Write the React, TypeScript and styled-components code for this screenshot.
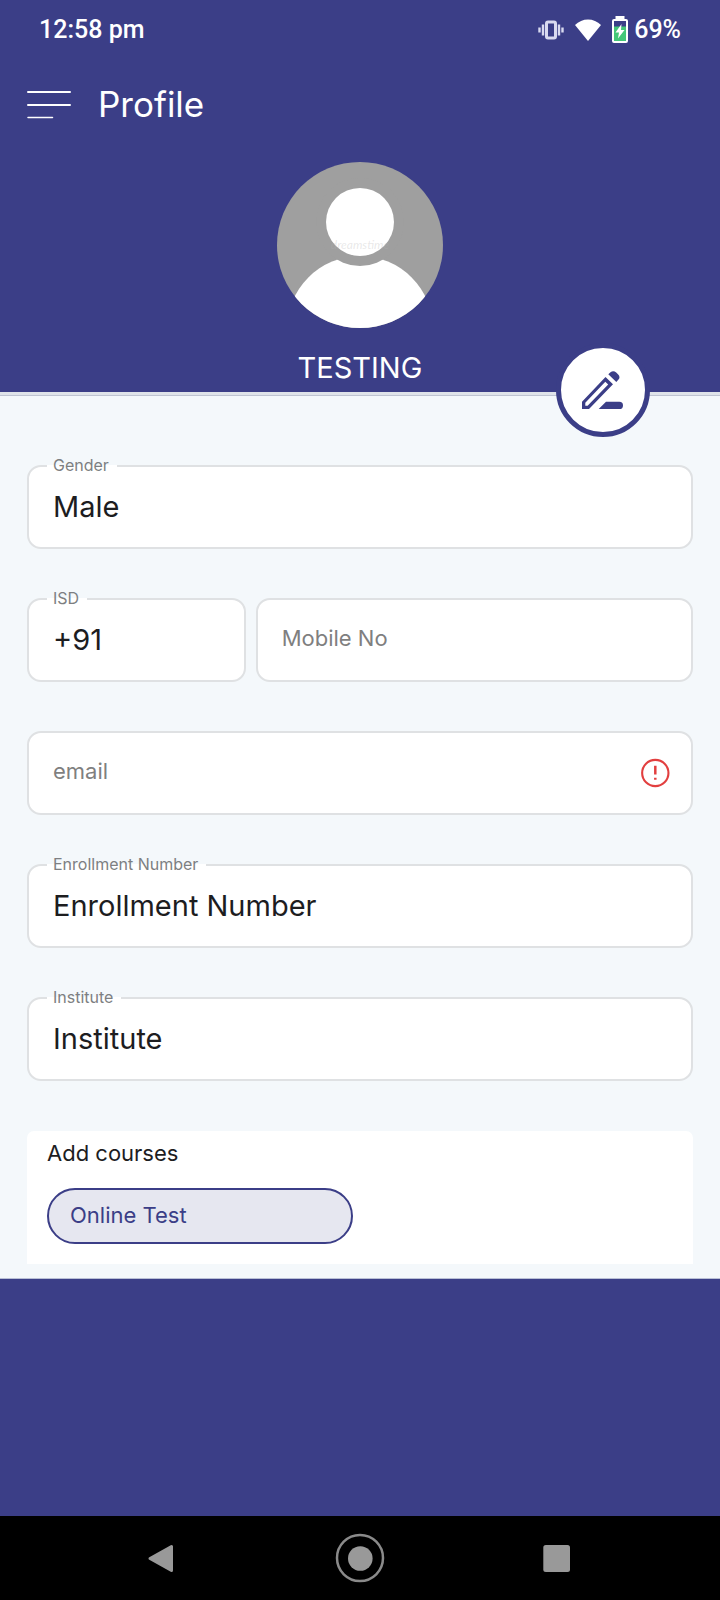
import React from "react";
import styled, { createGlobalStyle } from "styled-components";

const indigo = "#3b3e87";
const paper = "#f4f8fb";
const line = "#dfe1e3";

const GlobalStyle = createGlobalStyle`
  *, *::before, *::after { box-sizing: border-box; }
  body { margin: 0; background: ${indigo}; }
  button, input { font-family: inherit; }
`;

const Screen = styled.div`
  min-height: 100vh;
  display: flex;
  flex-direction: column;
  background: ${indigo};
  font-family: Inter, "Open Sans", sans-serif;
`;

const StatusBar = styled.div`
  height: 56px;
  padding: 3px 39px 0;
  display: flex;
  align-items: center;
  justify-content: space-between;
  color: #fff;
  font: 500 25px/28px Roboto, sans-serif;
`;

const StatusIcons = styled.div`
  display: flex;
  align-items: center;
  gap: 6px;

  svg { display: block; }
`;

const SignalIcons = styled.div`
  display: flex;
  align-items: center;
  gap: 11px;
`;

const Header = styled.header`
  height: 96px;
  padding: 0 27px;
  display: flex;
  align-items: center;
  gap: 27px;
`;

const IconButton = styled.button`
  padding: 0;
  border: 0;
  background: none;
  cursor: pointer;

  svg { display: block; }
`;

const Title = styled.h1`
  margin: 0;
  color: #fff;
  font-size: 35px;
  font-weight: 400;
  line-height: 48px;
`;

const Hero = styled.section`
  position: relative;
  padding-top: 10px;
  display: flex;
  flex-direction: column;
  align-items: center;
`;

const UserName = styled.h2`
  margin: 0;
  padding: 20px 0 4px;
  color: #fff;
  font-size: 29px;
  font-weight: 400;
  line-height: 40px;
`;

const EditButton = styled.button`
  position: absolute;
  right: 70px;
  bottom: -45px;
  width: 94px;
  height: 94px;
  padding: 0;
  display: grid;
  place-items: center;
  border: 5px solid ${indigo};
  border-radius: 50%;
  background: #fff;
  cursor: pointer;
`;

const Sheet = styled.main`
  padding: 70px 27px 14px;
  border-top: 3px solid #dfe3e9;
  border-bottom: 1px solid #b9bfd6;
  background: ${paper};
  box-shadow: inset 0 1px 0 #bfc4d2;
`;

const Form = styled.form`
  display: flex;
  flex-direction: column;
  gap: 49px;
`;

const FieldRow = styled.div<{ $columns?: string }>`
  display: grid;
  grid-template-columns: ${(p) => p.$columns ?? "1fr"};
  gap: 10px;
`;

const FieldBox = styled.div`
  position: relative;
  min-width: 0;
  height: 84px;
  padding: 0 21px 0 24px;
  display: flex;
  align-items: center;
  border: 2px solid ${line};
  border-radius: 14px;
  background: #fff;
`;

const FloatingLabel = styled.label`
  position: absolute;
  top: -14px;
  left: 18px;
  padding: 0 8px 0 6px;
  background: linear-gradient(${paper} 50%, #fff 50%);
  color: #7d7f82;
  font-size: 16px;
  line-height: 24px;
`;

const TextInput = styled.input`
  width: 100%;
  min-width: 0;
  height: 80px;
  padding: 0 0 2px;
  border: 0;
  outline: 0;
  background: none;
  color: #1d1d1f;
  font-size: 29px;

  &:placeholder-shown {
    padding-bottom: 4px;
    font-size: 22px;
  }

  &::placeholder {
    color: #7f7f7f;
    opacity: 1;
  }
`;

const Courses = styled.section`
  margin-top: 50px;
  padding: 6px 20px 20px;
  border-radius: 7px 7px 0 0;
  background: #fff;
`;

const CoursesTitle = styled.h3`
  margin: 0 0 19px;
  color: #1d1d1f;
  font-size: 22px;
  font-weight: 400;
  line-height: 32px;
`;

const CourseChip = styled.button`
  display: block;
  width: 46%;
  min-width: 306px;
  height: 56px;
  padding: 0 21px 2px;
  border: 2px solid ${indigo};
  border-radius: 28px;
  background: #e6e7f0;
  color: ${indigo};
  font-size: 22px;
  text-align: left;
  cursor: pointer;
`;

const NavBar = styled.nav`
  height: 84px;
  margin-top: auto;
  padding: 0 136px;
  display: flex;
  align-items: center;
  justify-content: space-between;
  background: #000;
`;

type FieldProps = {
  id: string;
  label: string;
  value?: string;
  type?: string;
  children?: React.ReactNode;
};

function Field({ id, label, value, type = "text", children }: FieldProps) {
  return (
    <FieldBox>
      {value && <FloatingLabel htmlFor={id}>{label}</FloatingLabel>}
      <TextInput
        id={id}
        type={type}
        defaultValue={value}
        placeholder={value ? undefined : label}
        aria-label={value ? undefined : label}
      />
      {children}
    </FieldBox>
  );
}

const VibrateIcon = () => (
  <svg width="26" height="20" viewBox="0 0 26 20" fill="none" stroke="#d9daf0" strokeWidth="2.400">
    <rect x="8.500" y="2" width="9" height="16" rx="1.500" strokeWidth="3" />
    <path d="M5 4.500v11M21 4.500v11M1.500 7.500v5M24.500 7.500v5" />
  </svg>
);

const WifiIcon = () => (
  <svg width="26" height="22" viewBox="0 0 26 22" fill="#fff">
    <path d="M0 6C7-1.500 19-1.500 26 6L13 22Z" />
  </svg>
);

const BatteryIcon = () => (
  <svg width="16" height="27" viewBox="0 0 16 27">
    <path d="M3.500 0h9v3h-9z" fill="#fff" />
    <rect x="1" y="4" width="14" height="22" rx="1" fill={indigo} stroke="#fff" strokeWidth="2" />
    <path d="M2 10.500h12V25H2z" fill="#43c778" />
    <path d="M9.500 8 3.500 16.500h3.500L6 22.500l6.500-8.500H9z" fill="#fff" />
  </svg>
);

const MenuIcon = () => (
  <svg width="44" height="30" viewBox="0 0 44 30" stroke="#fff" strokeWidth="2" strokeLinecap="round">
    <path d="M1 3h42M1 16h42" />
    <path d="M1 28.500h24.500" strokeWidth="1.500" />
  </svg>
);

const Avatar = () => (
  <svg width="166" height="166" viewBox="0 0 166 166" role="img" aria-label="Profile photo">
    <defs>
      <clipPath id="avatar-clip">
        <circle cx="83" cy="83" r="83" />
      </clipPath>
    </defs>
    <g clipPath="url(#avatar-clip)">
      <rect width="166" height="166" fill="#9f9f9f" />
      <circle cx="83" cy="167" r="73" fill="#fff" />
      <circle cx="83" cy="60" r="44" fill="#9f9f9f" />
      <circle cx="83" cy="60" r="34" fill="#fff" />
      <text
        x="83"
        y="87"
        textAnchor="middle"
        fontFamily="Lato, sans-serif"
        fontStyle="italic"
        fontSize="12"
        fill="#b4b4b4"
        fillOpacity="0.3"
      >
        dreamstime
      </text>
    </g>
  </svg>
);

const EditIcon = () => (
  <svg width="42" height="38" viewBox="0 0 42 38" fill={indigo}>
    <path
      fillRule="evenodd"
      d="M23.500 6 31 13.200 7 38H0V30.700ZM23.300 10.800 3.300 31.800V34.700H5.600L26.200 13.500Z"
    />
    <path d="M26.300 3.300 28.500 1.200Q31.500-1 34.200 1.600L36.200 3.500Q38.600 6 36.500 8.500L34.300 10.900Z" />
    <path d="M16.700 38 24 30.800H37.400a3.600 3.600 0 0 1 0 7.200Z" />
  </svg>
);

const AlertIcon = () => (
  <svg width="30" height="30" viewBox="0 0 30 30" fill="none" role="img" aria-label="Email not verified">
    <circle cx="15" cy="15" r="13.800" stroke="#e23f3f" strokeWidth="2.200" />
    <path d="M15 7.500v9M15 20v2.200" stroke="#e23f3f" strokeWidth="2.600" />
  </svg>
);

const BackIcon = () => (
  <svg width="50" height="50" viewBox="0 0 50 50" fill="#999">
    <path d="M35.500 13.500v24L14 25.500Z" stroke="#999" strokeWidth="3" strokeLinejoin="round" />
  </svg>
);

const HomeIcon = () => (
  <svg width="50" height="50" viewBox="0 0 50 50">
    <circle cx="25" cy="25" r="23" fill="none" stroke="#8a8a8a" strokeWidth="2.500" />
    <circle cx="25.300" cy="25.500" r="12.300" fill="#999" />
  </svg>
);

const RecentsIcon = () => (
  <svg width="50" height="50" viewBox="0 0 50 50" fill="#999">
    <rect x="9.300" y="12" width="26.700" height="27" rx="2.500" />
  </svg>
);

export default function App() {
  return (
    <Screen>
      <GlobalStyle />
      <StatusBar>
        <span>12:58 pm</span>
        <StatusIcons>
          <SignalIcons>
            <VibrateIcon />
            <WifiIcon />
            <BatteryIcon />
          </SignalIcons>
          <span>69%</span>
        </StatusIcons>
      </StatusBar>
      <Header>
        <IconButton type="button" aria-label="Open menu">
          <MenuIcon />
        </IconButton>
        <Title>Profile</Title>
      </Header>
      <Hero>
        <Avatar />
        <UserName>TESTING</UserName>
        <EditButton type="button" aria-label="Edit profile">
          <EditIcon />
        </EditButton>
      </Hero>
      <Sheet>
        <Form>
          <FieldRow>
            <Field id="gender" label="Gender" value="Male" />
          </FieldRow>
          <FieldRow $columns="1fr 2fr">
            <Field id="isd" label="ISD" value="+91" />
            <Field id="mobile" label="Mobile No" type="tel" />
          </FieldRow>
          <FieldRow>
            <Field id="email" label="email" type="email">
              <AlertIcon />
            </Field>
          </FieldRow>
          <FieldRow>
            <Field id="enrollment" label="Enrollment Number" value="Enrollment Number" />
          </FieldRow>
          <FieldRow>
            <Field id="institute" label="Institute" value="Institute" />
          </FieldRow>
        </Form>
        <Courses>
          <CoursesTitle>Add courses</CoursesTitle>
          <CourseChip type="button">Online Test</CourseChip>
        </Courses>
      </Sheet>
      <NavBar aria-label="System navigation">
        <IconButton type="button" aria-label="Back">
          <BackIcon />
        </IconButton>
        <IconButton type="button" aria-label="Home">
          <HomeIcon />
        </IconButton>
        <IconButton type="button" aria-label="Recent apps">
          <RecentsIcon />
        </IconButton>
      </NavBar>
    </Screen>
  );
}
